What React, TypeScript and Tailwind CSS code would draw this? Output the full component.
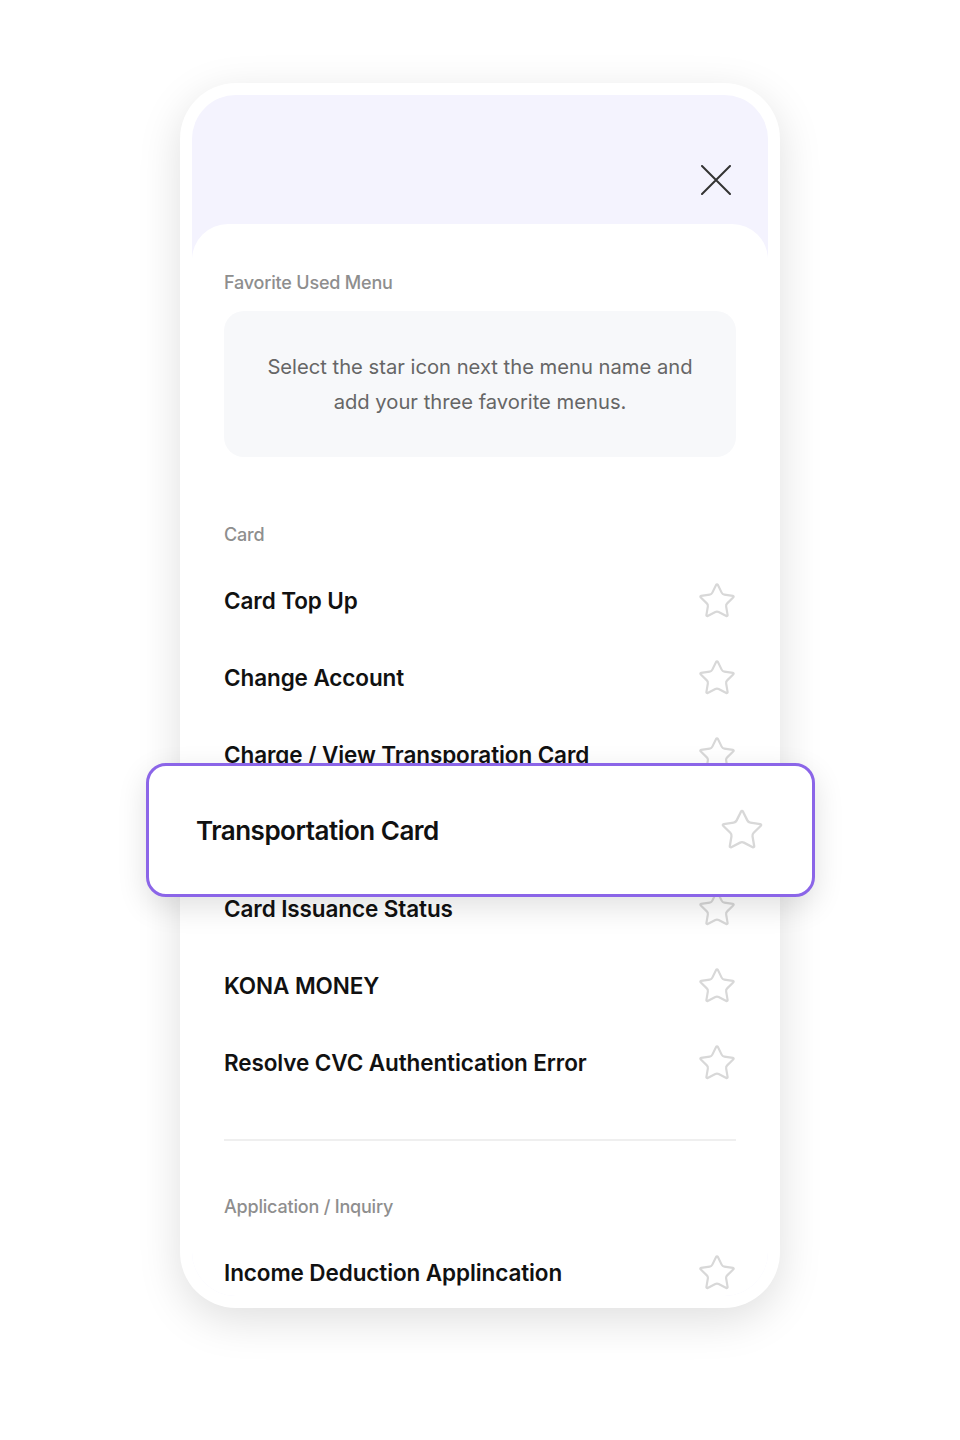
import { Star } from 'lucide-react';

const cardMenus = [
  'Card Top Up',
  'Change Account',
  'Charge / View Transporation Card',
  'Transportation Card',
  'Card Issuance Status',
  'KONA MONEY',
  'Resolve CVC Authentication Error',
];

// the highlighted row is drawn again over the list, so its own label stays hidden
function MenuRow({ label, hidden }: { label: string; hidden?: boolean }) {
  return (
    <div className="flex h-[77px] items-center justify-between">
      <span className={`text-[22.5px] font-semibold tracking-[-0.1px] text-[#111] ${hidden ? 'invisible' : ''}`}>{label}</span>
      <Star size={40} strokeWidth={1.3} className="text-[#d8d8d8] -mr-[1px]" />
    </div>
  );
}

export default function App() {
  return (
    <div className="flex h-[1440px] w-[960px] justify-center bg-white pt-[83px] font-['Inter','Liberation_Sans',sans-serif]">
      <div className="relative flex h-[1225px] w-[600px] flex-col rounded-[56px] bg-white p-[12px] shadow-[0_12px_44px_rgba(0,0,0,0.13)]">
        <div className="flex flex-1 flex-col overflow-hidden rounded-[44px] bg-[#f4f3fe]">
          {/* header */}
          <div className="flex h-[129px] shrink-0 items-start justify-end pr-[37px] pt-[70px]">
            <svg width="30" height="30" viewBox="0 0 30 30" fill="none">
              <path d="M1 1 L29 29 M29 1 L1 29" stroke="#333" strokeWidth="2" strokeLinecap="round" />
            </svg>
          </div>

          {/* sheet */}
          <div className="flex-1 rounded-t-[36px] bg-white px-[32px] pt-[47px]">
            <p className="text-[18px] font-medium leading-[24px] tracking-[-0.2px] text-[#8e8e8e]">Favorite Used Menu</p>
            <div className="mt-[16px] flex h-[146px] items-center justify-center rounded-[20px] bg-[#f7f8fa] text-center">
              <p className="text-[20.2px] leading-[35px] text-[#666]">
                Select the star icon next the menu name and
                <br />
                add your three favorite menus.
              </p>
            </div>

            <p className="mt-[66px] text-[18px] font-medium leading-[24px] tracking-[-0.2px] text-[#8e8e8e]">Card</p>
            <div className="mt-[15px]">
              {cardMenus.map((m) => (
                <MenuRow key={m} label={m} hidden={m === 'Transportation Card'} />
              ))}
            </div>

            <div className="mt-[38px] h-[2px] bg-[#efefef]" />

            <p className="mt-[54px] text-[18px] font-medium leading-[24px] tracking-[-0.2px] text-[#8e8e8e]">Application / Inquiry</p>
            <div className="mt-[15px]">
              <MenuRow label="Income Deduction Applincation" />
            </div>
          </div>
        </div>

        {/* highlighted item */}
        <div className="absolute left-[-34px] top-[680px] flex h-[134px] w-[669px] items-center justify-between rounded-[20px] border-[3px] border-[#8b65e8] bg-white pl-[47px] pr-[47px] shadow-[0_10px_30px_rgba(0,0,0,0.12)]">
          <span className="text-[26px] font-semibold tracking-[-0.5px] text-[#111]">Transportation Card</span>
          <Star size={46} strokeWidth={1.2} className="text-[#d8d8d8]" />
        </div>
      </div>
    </div>
  );
}
